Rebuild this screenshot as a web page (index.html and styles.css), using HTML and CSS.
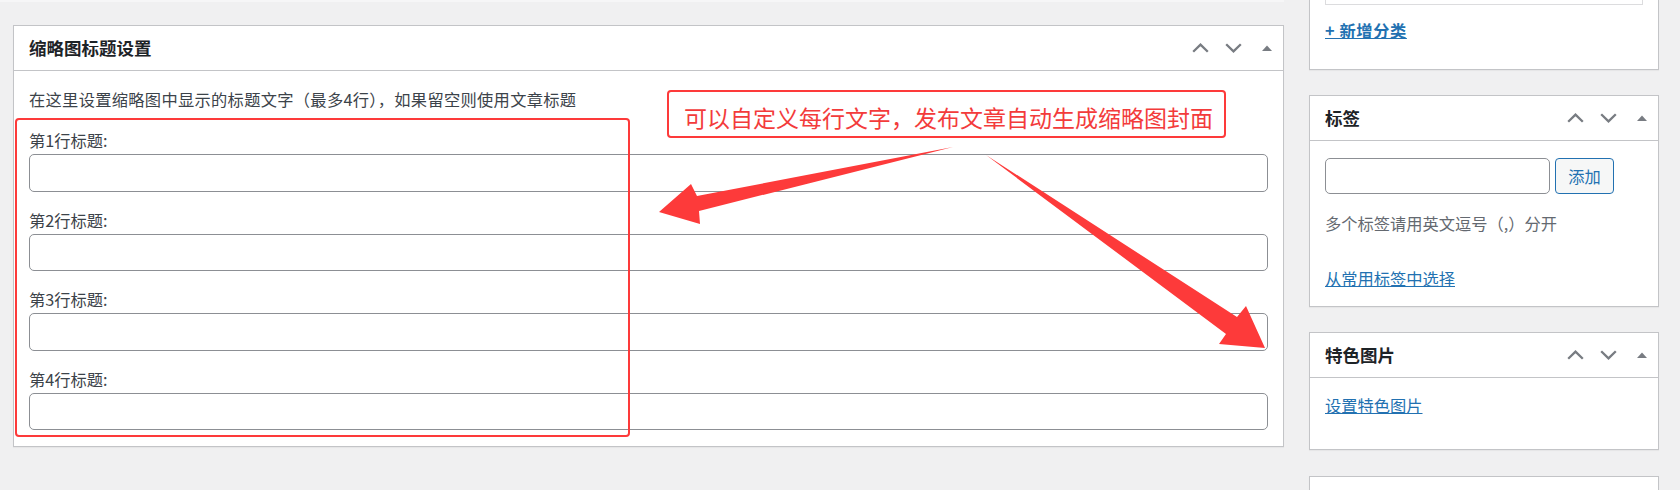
FILE: index.html
```html
<!DOCTYPE html>
<html lang="zh-CN">
<head>
<meta charset="utf-8">
<title>缩略图标题设置</title>
<link rel="stylesheet" href="styles.css">
</head>
<body>
<div class="layout">
  <div class="main-col">
    <div class="top-strip"></div>
    <div class="postbox main-box">
      <div class="postbox-header">
        <h2>缩略图标题设置</h2>
        <div class="handle-actions">
          <span class="handle"><svg width="17" height="10" viewBox="0 0 17 10"><polyline points="1.2,8.8 8.5,1.6 15.8,8.8" fill="none" stroke="#787c82" stroke-width="2.3"/></svg></span>
          <span class="handle"><svg width="17" height="10" viewBox="0 0 17 10"><polyline points="1.2,1.2 8.5,8.4 15.8,1.2" fill="none" stroke="#787c82" stroke-width="2.3"/></svg></span>
          <span class="handle"><svg width="10" height="6" viewBox="0 0 10 6"><polygon points="0,6 5,0.4 10,6" fill="#787c82"/></svg></span>
        </div>
      </div>
      <div class="inside">
        <p class="desc">在这里设置缩略图中显示的标题文字（最多4行），如果留空则使用文章标题</p>
        <div class="field"><label>第1行标题:</label><input type="text"></div>
        <div class="field"><label>第2行标题:</label><input type="text"></div>
        <div class="field"><label>第3行标题:</label><input type="text"></div>
        <div class="field"><label>第4行标题:</label><input type="text"></div>
      </div>
    </div>
  </div>
  <div class="side-col">
    <div class="postbox cat-box">
      <div class="checklist"></div>
      <a class="link strong" href="#">+ 新增分类</a>
    </div>
    <div class="postbox tag-box">
      <div class="postbox-header">
        <h2>标签</h2>
        <div class="handle-actions">
          <span class="handle"><svg width="17" height="10" viewBox="0 0 17 10"><polyline points="1.2,8.8 8.5,1.6 15.8,8.8" fill="none" stroke="#787c82" stroke-width="2.3"/></svg></span>
          <span class="handle"><svg width="17" height="10" viewBox="0 0 17 10"><polyline points="1.2,1.2 8.5,8.4 15.8,1.2" fill="none" stroke="#787c82" stroke-width="2.3"/></svg></span>
          <span class="handle"><svg width="10" height="6" viewBox="0 0 10 6"><polygon points="0,6 5,0.4 10,6" fill="#787c82"/></svg></span>
        </div>
      </div>
      <div class="inside tag-inside">
        <div class="tag-row"><input type="text" class="tag-input"><button class="btn">添加</button></div>
        <p class="help">多个标签请用英文逗号（,）分开</p>
        <a class="link" href="#">从常用标签中选择</a>
      </div>
    </div>
    <div class="postbox feat-box">
      <div class="postbox-header">
        <h2>特色图片</h2>
        <div class="handle-actions">
          <span class="handle"><svg width="17" height="10" viewBox="0 0 17 10"><polyline points="1.2,8.8 8.5,1.6 15.8,8.8" fill="none" stroke="#787c82" stroke-width="2.3"/></svg></span>
          <span class="handle"><svg width="17" height="10" viewBox="0 0 17 10"><polyline points="1.2,1.2 8.5,8.4 15.8,1.2" fill="none" stroke="#787c82" stroke-width="2.3"/></svg></span>
          <span class="handle"><svg width="10" height="6" viewBox="0 0 10 6"><polygon points="0,6 5,0.4 10,6" fill="#787c82"/></svg></span>
        </div>
      </div>
      <div class="inside feat-inside">
        <a class="link" href="#">设置特色图片</a>
      </div>
    </div>
    <div class="postbox next-box"></div>
  </div>
</div>

<div class="red-frame"></div>
<div class="callout">可以自定义每行文字，发布文章自动生成缩略图封面</div>
<svg class="arrows" width="1680" height="490" viewBox="0 0 1680 490">
  <polygon points="953,147 697,196 691,184 659,212 700,224 699,211" fill="#fd3a3a"/>
  <polygon points="986,155 1237,317 1246,306 1265,348 1219,344 1226,334" fill="#fd3a3a"/>
</svg>
</body>
</html>
```

FILE: styles.css
```css
* { box-sizing: border-box; }
html, body { margin: 0; padding: 0; }
body {
  position: relative;
  width: 1680px;
  height: 490px;
  overflow: hidden;
  background: #f0f0f1;
  font-family: "Noto Sans CJK SC", "Noto Sans", sans-serif;
  font-size: 16.25px;
  color: #3c434a;
}
.layout { display: flex; align-items: flex-start; }
.main-col { width: 1284px; flex: none; }
.top-strip { height: 2px; background: #f6f6f7; }
.postbox {
  background: #fff;
  border: 1px solid #c3c4c7;
  box-shadow: 0 1px 1px rgba(0,0,0,0.04);
}
.main-box { margin: 23px 0 0 13px; }
.postbox-header {
  display: flex;
  align-items: center;
  height: 45px;
  border-bottom: 1px solid #c3c4c7;
}
.postbox-header h2 {
  flex: 1;
  margin: 0;
  padding: 0 15px;
  font-size: 17.5px;
  font-weight: 600;
  line-height: 24px;
  color: #1d2327;
}
.handle-actions { display: flex; height: 44px; }
.handle {
  width: 33px;
  height: 44px;
  display: flex;
  align-items: center;
  justify-content: center;
}
.inside { padding: 17px 15px 16px; }
.desc { margin: 0 0 22px; line-height: 22px; letter-spacing: 0.3px; }
.field label { display: block; line-height: 16px; margin-bottom: 6px; }
.field input {
  display: block;
  width: 100%;
  height: 37.5px;
  margin: 0 0 20px;
  padding: 0 10px;
  border: 1px solid #8c8f94;
  border-radius: 5px;
  background: #fff;
  font: inherit;
}
.field:last-child input { margin-bottom: 0; }

.side-col { width: 350px; flex: none; margin-left: 25px; }
.cat-box { border-top: none; padding: 0 15px 28px; }
.checklist {
  height: 5px;
  border: 1px solid #dcdcde;
  border-top: none;
  margin-bottom: 14px;
}
.link {
  display: block;
  width: fit-content;
  line-height: 22px;
  color: #2271b1;
  text-decoration: underline;
}
.strong { font-weight: 600; letter-spacing: 0.6px; }
.tag-box { margin-top: 25px; }
.tag-inside { padding: 17px 15px 17px; }
.tag-row { display: flex; gap: 5px; }
.tag-input {
  width: 225px;
  height: 36px;
  border: 1px solid #8c8f94;
  border-radius: 5px;
  background: #fff;
  font: inherit;
}
.btn {
  width: 59px;
  height: 36px;
  padding: 0;
  border: 1px solid #2271b1;
  border-radius: 4px;
  background: #f6f7f7;
  color: #2271b1;
  font: inherit;
}
.help { margin: 18px 0 33px; line-height: 22px; color: #646970; }
.feat-box { margin-top: 25px; }
.feat-inside { padding: 16px 15px 33px; }
.next-box { margin-top: 26px; height: 60px; }

.red-frame {
  position: absolute;
  left: 15px;
  top: 118px;
  width: 615px;
  height: 319px;
  border: 2.5px solid #fd3a3a;
  border-radius: 4px;
}
.callout {
  position: absolute;
  left: 667px;
  top: 90px;
  width: 559px;
  height: 48px;
  padding: 5px 0 0 15px;
  display: flex;
  align-items: center;
  border: 2.5px solid #fd3a3a;
  border-radius: 4px;
  background: #fff;
  color: #f33b3b;
  font-size: 23px;
  line-height: 28px;
  white-space: nowrap;
}
.arrows { position: absolute; left: 0; top: 0; pointer-events: none; }
```
